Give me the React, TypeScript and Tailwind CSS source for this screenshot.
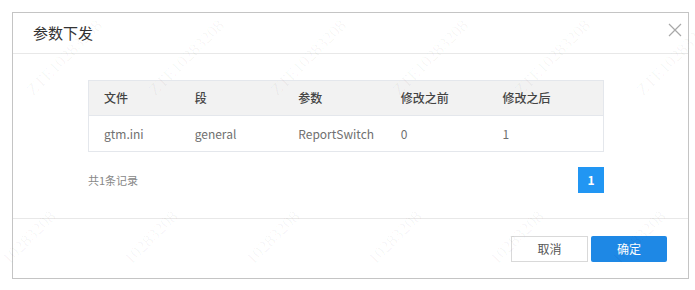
const columns = ['文件', '段', '参数', '修改之前', '修改之后'];
const widths = ['w-[91px]', 'w-[104px]', 'w-[103px]', 'w-[102px]', 'w-[116px]'];
const rows = [['gtm.ini', 'general', 'ReportSwitch', '0', '1']];

const marks = [
  { text: 'ZTE10283208', cls: 'left-[15px] top-[45px]' },
  { text: 'ZTE10283208', cls: 'left-[137px] top-[45px]' },
  { text: 'ZTE10283208', cls: 'left-[259px] top-[45px]' },
  { text: 'ZTE10283208', cls: 'left-[381px] top-[45px]' },
  { text: 'ZTE10283208', cls: 'left-[503px] top-[45px]' },
  { text: 'ZTE10283208', cls: 'left-[625px] top-[45px]' },
  { text: '10283208', cls: 'left-[-5px] top-[225px]' },
  { text: '10283208', cls: 'left-[117px] top-[225px]' },
  { text: '10283208', cls: 'left-[239px] top-[225px]' },
  { text: '10283208', cls: 'left-[361px] top-[225px]' },
  { text: '10283208', cls: 'left-[483px] top-[225px]' },
  { text: '10283208', cls: 'left-[605px] top-[225px]' },
];

export default function App() {
  return (
    <div
      className="w-[695px] h-[290px] bg-white p-[12px] relative overflow-hidden"
      style={{ fontFamily: '"Noto Sans CJK SC", "Noto Sans", sans-serif' }}
    >
      <div className="w-[677px] h-[267px] border border-[#c4c4c4] bg-white flex flex-col">
        <div className="h-[41px] flex items-center justify-between pl-[20px] pr-[6px] border-b border-[#e8e8e8]">
          <span className="text-[15px] text-[#333]">参数下发</span>
          <svg width="14" height="14" viewBox="0 0 14 14" className="mt-[-6px]">
            <path d="M1 1 L13 13 M13 1 L1 13" stroke="#a8a8a8" strokeWidth="1.2" />
          </svg>
        </div>

        <div className="h-[165px] pl-[75px] pt-[26px] border-b border-[#e8e8e8]">
          <div className="w-[516px] border border-[#e4e7ec]">
            <div className="flex h-[35px] items-center bg-[#f2f2f2] border-b border-[#e4e7ec]">
              {columns.map((c, i) => (
                <div key={c} className={`${widths[i]} pl-[15px] text-[12px] font-medium text-[#444]`}>
                  {c}
                </div>
              ))}
            </div>
            {rows.map((r) => (
              <div key={r[0]} className="flex h-[35px] items-center">
                {r.map((v, i) => (
                  <div key={i} className={`${widths[i]} pl-[15px] text-[12px] text-[#707070]`}>
                    {v}
                  </div>
                ))}
              </div>
            ))}
          </div>
          <div className="w-[516px] flex items-center justify-between mt-[15px]">
            <span className="text-[11px] text-[#888]">共1条记录</span>
            <span className="w-[26px] h-[26px] bg-[#2196f3] text-white text-[12px] font-bold flex items-center justify-center">
              1
            </span>
          </div>
        </div>

        <div className="flex-1 flex items-center justify-end gap-[3px] pr-[21px]">
          <button className="w-[77px] h-[26px] border border-[#d9d9d9] bg-white text-[12px] text-[#555]">
            取消
          </button>
          <button className="w-[76px] h-[26px] rounded-[2px] bg-[#1e88e5] text-[12px] text-white">
            确定
          </button>
        </div>
      </div>

      {marks.map((m, i) => (
        <span
          key={i}
          className={`absolute ${m.cls} -rotate-45 text-[17px] text-[#000]/[0.04] pointer-events-none select-none`}
          style={{ fontFamily: '"Liberation Serif", serif' }}
        >
          {m.text}
        </span>
      ))}
    </div>
  );
}
